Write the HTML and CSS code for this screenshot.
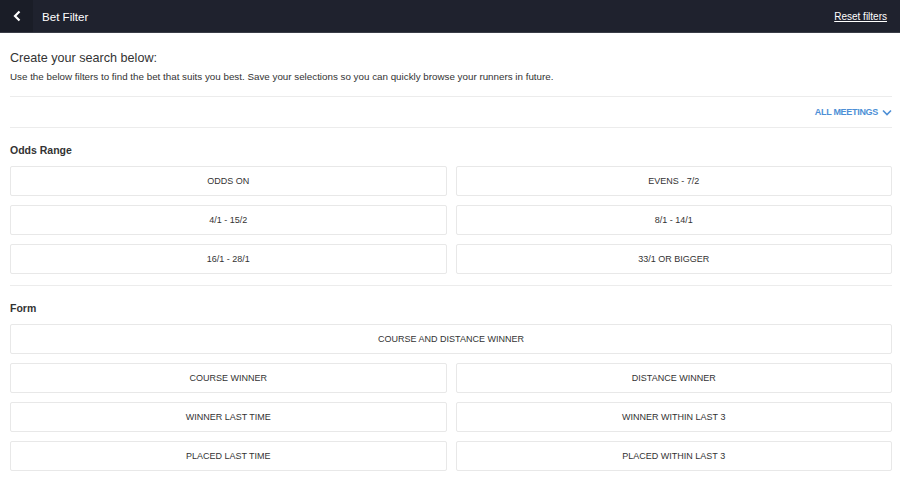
FILE: index.html
```html
<!DOCTYPE html>
<html lang="en">
<head>
  <meta charset="UTF-8">
  <meta name="viewport" content="width=device-width, initial-scale=1.0">
  <title>Bet Filter</title>
  <link rel="stylesheet" href="styles.css">
</head>
<body>
  <div class="header">
    <div class="header-left">
      <button class="back-button">
        <svg width="10" height="12" viewBox="0 0 10 12"><path d="M7.5 1.5 L3 6 L7.5 10.5" fill="none" stroke="#fff" stroke-width="2.2"/></svg>
      </button>
      <span class="title">Bet Filter</span>
    </div>
    <a class="reset" href="#">Reset filters</a>
  </div>

  <div class="content">
    <div class="intro">
      <h1>Create your search below:</h1>
      <p>Use the below filters to find the bet that suits you best. Save your selections so you can quickly browse your runners in future.</p>
    </div>

    <div class="meetings">
      <span>ALL MEETINGS</span>
      <svg width="10" height="7" viewBox="0 0 10 7"><path d="M1 1.5 L5 5.5 L9 1.5" fill="none" stroke="#4d8fd6" stroke-width="1.6"/></svg>
    </div>

    <div class="section">
      <h2>Odds Range</h2>
      <div class="grid">
        <button class="option">ODDS ON</button>
        <button class="option">EVENS - 7/2</button>
        <button class="option">4/1 - 15/2</button>
        <button class="option">8/1 - 14/1</button>
        <button class="option">16/1 - 28/1</button>
        <button class="option">33/1 OR BIGGER</button>
      </div>
    </div>

    <div class="section last">
      <h2>Form</h2>
      <div class="grid">
        <button class="option wide">COURSE AND DISTANCE WINNER</button>
        <button class="option">COURSE WINNER</button>
        <button class="option">DISTANCE WINNER</button>
        <button class="option">WINNER LAST TIME</button>
        <button class="option">WINNER WITHIN LAST 3</button>
        <button class="option">PLACED LAST TIME</button>
        <button class="option">PLACED WITHIN LAST 3</button>
      </div>
    </div>
  </div>
</body>
</html>
```

FILE: styles.css
```css
* {
  margin: 0;
  padding: 0;
  box-sizing: border-box;
  font-family: "Liberation Sans", Arial, sans-serif;
}

body, html {
  width: 100%;
  height: 100%;
  overflow: hidden;
  background: #fff;
}

.header {
  height: 33px;
  background: #1f222e;
  border-bottom: 1px solid #3a3d47;
  display: flex;
  align-items: center;
  justify-content: space-between;
  padding: 0 13px 0 0;
}

.header-left {
  display: flex;
  align-items: center;
  height: 100%;
}

.back-button {
  width: 33px;
  height: 100%;
  background: #1a1d27;
  border: none;
  display: flex;
  align-items: center;
  justify-content: center;
}

.title {
  color: #fff;
  font-size: 11.6px;
  margin-left: 9px;
}

.reset {
  color: #fff;
  font-size: 10px;
  text-decoration: underline;
}

.content {
  padding: 0 8px 0 10px;
}

.intro {
  padding: 18px 0 14px;
  border-bottom: 1px solid #ececec;
}

.intro h1 {
  font-size: 12.6px;
  font-weight: normal;
  color: #333;
  margin-bottom: 6px;
}

.intro p {
  font-size: 9.8px;
  color: #333;
}

.meetings {
  height: 31px;
  display: flex;
  align-items: center;
  justify-content: flex-end;
  gap: 4px;
  border-bottom: 1px solid #ececec;
  color: #4d8fd6;
  font-size: 9px;
  font-weight: bold;
  letter-spacing: -0.3px;
}

.section {
  padding: 16px 0 11px;
  border-bottom: 1px solid #ececec;
}

.section.last {
  border-bottom: none;
}

.section h2 {
  font-size: 10.5px;
  font-weight: bold;
  color: #333;
  margin-bottom: 10px;
}

.grid {
  display: grid;
  grid-template-columns: 1fr 1fr;
  gap: 9px;
}

.option {
  height: 30px;
  background: #fff;
  border: 1px solid #e8e8e8;
  border-radius: 2px;
  font-size: 9px;
  color: #333;
  cursor: pointer;
}

.option.wide {
  grid-column: 1 / 3;
}
```
